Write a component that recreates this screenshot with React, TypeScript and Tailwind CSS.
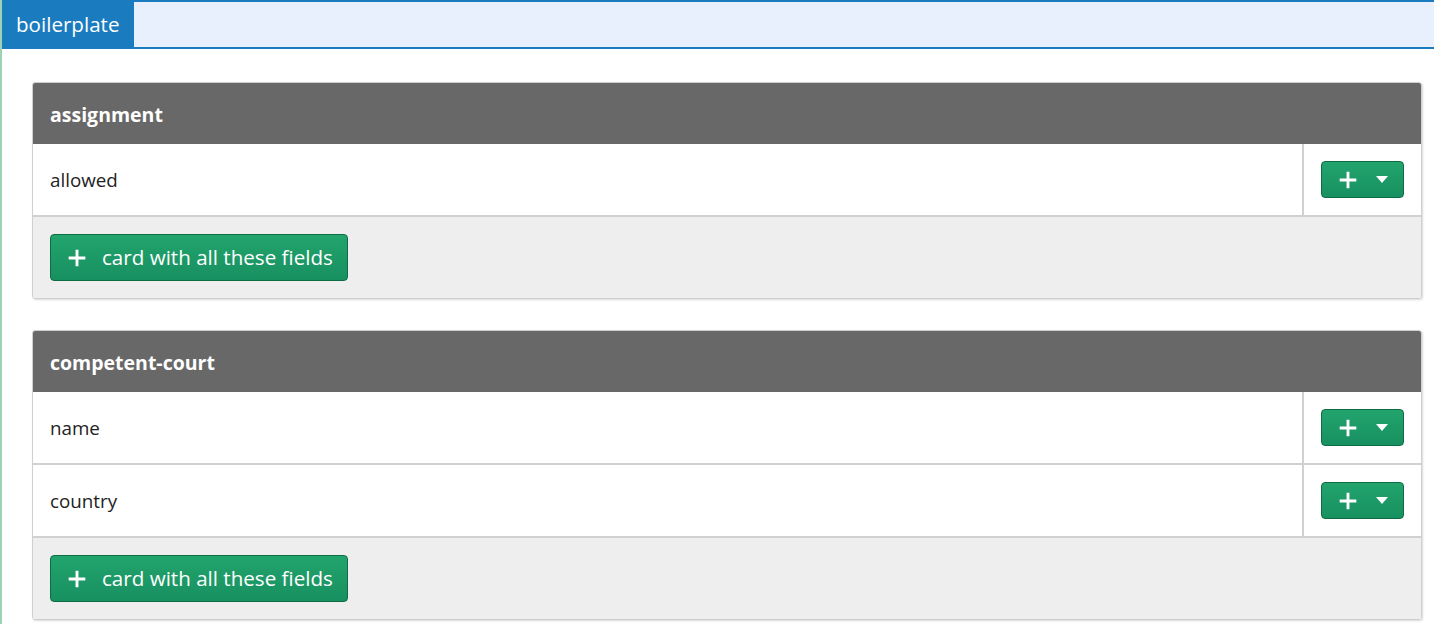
const FONT = { fontFamily: '"Open Sans", "Noto Sans", sans-serif' };

const CARDS = [
  { title: "assignment", fields: ["allowed"] },
  { title: "competent-court", fields: ["name", "country"] },
];

function Plus({ size = 18 }: { size?: number }) {
  return (
    <svg width={size} height={size} viewBox="0 0 18 18" fill="none">
      <path d="M9 1.5v15M1.5 9h15" stroke="white" strokeWidth="2.6" />
    </svg>
  );
}

function AddButton() {
  return (
    <button className="flex h-[37px] w-[83px] items-center justify-center gap-[18px] rounded-[4px] border border-[#0e6b43] bg-gradient-to-b from-[#22a46d] to-[#179060]">
      <Plus size={20} />
      <svg width="12" height="8" viewBox="0 0 12 8">
        <path d="M0 0h12L6 7z" fill="white" />
      </svg>
    </button>
  );
}

function Card({ title, fields }: { title: string; fields: string[] }) {
  return (
    <div className="overflow-hidden rounded-[3px] border border-[#cfcfcf] shadow-[1px_1px_2px_rgba(0,0,0,0.15)]">
      <div className="flex h-[61px] items-center bg-[#686868] px-[17px] pt-[3px] text-[19.5px] font-bold text-white">
        {title}
      </div>
      {fields.map((f) => (
        <div key={f} className="flex h-[73px] border-b-2 border-[#d0d0d0] bg-white">
          <div className="flex flex-1 items-center px-[17px] pt-[2px] text-[18.8px] text-[#222]">{f}</div>
          <div className="flex w-[119px] items-center justify-center border-l-2 border-[#d0d0d0]">
            <AddButton />
          </div>
        </div>
      ))}
      <div className="bg-[#eeeeee] px-[17px] py-[17px]">
        <button className="flex h-[47px] items-center gap-[15px] rounded-[4px] border border-[#0e6b43] bg-gradient-to-b from-[#22a46d] to-[#179060] pl-[16px] pr-[14px] text-[20.6px] text-white">
          <Plus size={20} />
          <span>card with all these fields</span>
        </button>
      </div>
    </div>
  );
}

export default function App() {
  return (
    <div className="min-h-[624px] border-l-2 border-[#9bd3b4] bg-white" style={FONT}>
      <div className="flex h-[49px] border-y-2 border-[#1a7bbf] bg-[#e8effd]">
        <div className="flex items-center bg-[#1a7bbf] px-[14px] text-[20.6px] text-white">boilerplate</div>
      </div>
      <div className="flex flex-col gap-[31px] pl-[30px] pr-[12px] pt-[33px]">
        {CARDS.map((c) => (
          <Card key={c.title} {...c} />
        ))}
      </div>
    </div>
  );
}
